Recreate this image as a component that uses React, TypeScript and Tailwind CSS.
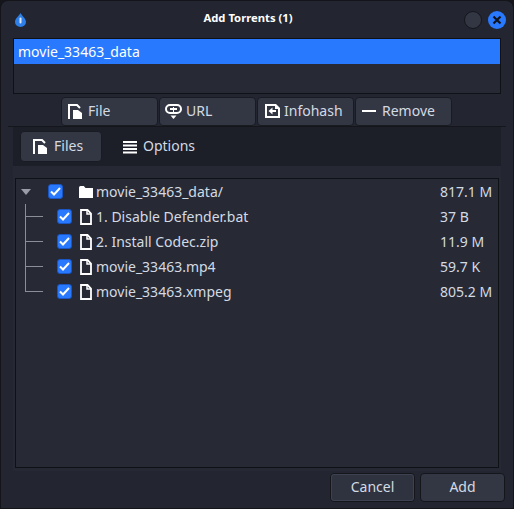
import type { ReactNode } from 'react'

const FILES = [
  { name: '1. Disable Defender.bat', size: '37 B' },
  { name: '2. Install Codec.zip', size: '11.9 M' },
  { name: 'movie_33463.mp4', size: '59.7 K' },
  { name: 'movie_33463.xmpeg', size: '805.2 M' },
]

function AddFileIcon({ className }: { className?: string }) {
  return (
    <svg width="14" height="15" viewBox="0 0 14 15" fill="none" className={className}>
      <path d="M1 15V1h8l3 3" stroke="#fff" strokeWidth="2" />
      <path d="M5 6h5l4 3v6H5z" fill="#fff" />
    </svg>
  )
}

function LinkIcon() {
  return (
    <svg width="17" height="15" viewBox="0 0 17 15" fill="none">
      <rect x="1" y="1" width="15" height="8" rx="4" stroke="#fff" strokeWidth="2" />
      <path d="M5 5h7" stroke="#fff" strokeWidth="2" />
      <path d="M8.500 3v5" stroke="#fff" strokeWidth="1" />
      <path d="M5.500 11.500h6L8.500 15z" fill="#fff" />
    </svg>
  )
}

function InfohashIcon() {
  return (
    <svg width="15" height="14" viewBox="0 0 15 14" fill="none" className="ml-[2px]">
      <path d="M0 0h11l4 4v10H0z" fill="#fff" />
      <path d="M2 2h8v3h3v7H2z" fill="#333744" />
      <path d="M3.500 7l4-3.500V6h3.500v2H7.500v2.500z" fill="#fff" />
    </svg>
  )
}

function DocIcon() {
  return (
    <svg width="12" height="16" viewBox="0 0 12 16" fill="none" className="shrink-0">
      <path d="M1 1h6.500L11 4.500V15H1z" stroke="#fff" strokeWidth="1.800" />
      <path d="M7 1v4h4" stroke="#fff" strokeWidth="1.500" />
    </svg>
  )
}

function FolderIcon() {
  return (
    <svg width="14" height="12" viewBox="0 0 14 12" className="shrink-0">
      <path d="M0 1.500A1.500 1.500 0 0 1 1.500 0h3.300l1.700 2H14v10H0z" fill="#fff" />
    </svg>
  )
}

function Check() {
  return (
    <span className="flex h-[15px] w-[15px] shrink-0 items-center justify-center rounded-[3px] border border-[#1a56c4] bg-[#2979ff]">
      <svg width="11" height="9" viewBox="0 0 11 9" fill="none">
        <path d="M1 4.500l3 3 6-6.500" stroke="#fff" strokeWidth="2" />
      </svg>
    </span>
  )
}

function ToolButton({ icon, label }: { icon: ReactNode; label: string }) {
  return (
    <button className="flex h-[29px] w-[97px] items-center rounded-[4px] border border-[#191b22] bg-[#333744] pb-[2px] pl-[5px] text-[14px] text-[#d3dae3]">
      <span className="mt-[1px] flex w-[21px] items-center">{icon}</span>
      {label}
    </button>
  )
}

export default function App() {
  return (
    <div className="h-[509px] w-[514px] overflow-hidden bg-[#14161c] font-['Noto_Sans',sans-serif] text-[14px] text-[#d3dae3]">
      <div className="flex h-full flex-col rounded-t-[8px] border border-[#13151b] bg-[#232631]">
        {/* Title bar */}
        <div className="flex h-[37px] shrink-0 items-center pl-[14px] pr-[7px]">
          <svg width="11" height="14" viewBox="0 0 11 14">
            <path d="M5.500 0C4.200 2.800 0 5.500 0 9a5.500 5 0 0 0 11 0C11 5.500 6.800 2.800 5.500 0z" fill="#2e7fe8" />
            <rect x="4.500" y="4.500" width="2" height="6" rx="1" fill="#dfe9f8" />
          </svg>
          <div className="ml-[6px] flex-1 pb-[2px] text-center text-[11.250px] font-bold text-white">Add Torrents (1)</div>
          <div className="flex gap-[6px]">
            <span className="h-[18px] w-[18px] rounded-full border border-[#14161c] bg-[#333744]" />
            <span className="flex h-[18px] w-[18px] items-center justify-center rounded-full bg-[#2979ff]">
              <svg width="10" height="10" viewBox="0 0 10 10" fill="none">
                <path d="M1.500 1.500l7 7M8.500 1.500l-7 7" stroke="#11131a" strokeWidth="2.200" />
              </svg>
            </span>
          </div>
        </div>

        {/* Torrent list */}
        <div className="mx-[12px] h-[56px] shrink-0 border border-[#0f1116] bg-[#272a35]">
          <div className="flex h-[25px] items-center bg-[#2979ff] pl-[4px] text-white">movie_33463_data</div>
        </div>

        {/* Add / remove */}
        <div className="mt-[3px] flex shrink-0 gap-px pl-[60px]">
          <ToolButton icon={<AddFileIcon className="ml-px" />} label="File" />
          <ToolButton icon={<LinkIcon />} label="URL" />
          <ToolButton icon={<InfohashIcon />} label="Infohash" />
          <ToolButton icon={<div className="ml-px h-[2px] w-[14px] bg-white" />} label="Remove" />
        </div>

        {/* Tabs */}
        <div className="mx-[7px] flex min-h-0 flex-1 flex-col border-t border-[#14161c]">
          <div className="mx-[5px] h-[344px] shrink-0 bg-[#262934]">
            <div className="flex h-[39px] items-center gap-[21px] bg-[#1c1f28] pl-[7px]">
              <div className="flex h-[31px] w-[82px] items-center gap-[7px] rounded-[4px] border border-[#191b22] bg-[#333744] pl-[12px]">
                <AddFileIcon />
                <span className="mb-[2px]">Files</span>
              </div>
              <div className="flex items-center gap-[6px]">
                <svg width="14" height="14" viewBox="0 0 14 14" fill="#fff">
                  <path d="M0 1h14v2H0zM0 4.500h14v2H0zM0 8h14v2H0zM0 11.500h14v2H0z" />
                </svg>
                <span className="mb-[2px]">Options</span>
              </div>
            </div>

            {/* File tree */}
            <div className="mx-[2px] mt-[12px] flex h-[290px] flex-col border border-[#0f1116] bg-[#272a35]">
              <div className="flex h-[25px] items-center px-[5px]">
                <svg width="10" height="6" viewBox="0 0 10 6" className="shrink-0">
                  <path d="M0 0h10L5 6z" fill="#9a9da6" />
                </svg>
                <span className="ml-[17px]">
                  <Check />
                </span>
                <span className="ml-[16px]">
                  <FolderIcon />
                </span>
                <span className="ml-[3px] flex-1">movie_33463_data/</span>
                <span className="w-[53px]">817.1 M</span>
              </div>
              {FILES.map((file, index) => (
                <div key={file.name} className="relative flex h-[25px] items-center pl-[41px] pr-[5px]">
                  <span
                    className={`absolute left-[9px] top-0 w-px bg-[#8b8e96] ${
                      index === FILES.length - 1 ? 'h-[13px]' : 'h-[25px]'
                    }`}
                  />
                  <span className="absolute left-[9px] top-[12px] h-px w-[18px] bg-[#8b8e96]" />
                  <Check />
                  <span className="ml-[8px]">
                    <DocIcon />
                  </span>
                  <span className="ml-[4px] flex-1">{file.name}</span>
                  <span className="w-[53px]">{file.size}</span>
                </div>
              ))}
            </div>
          </div>

          {/* Footer */}
          <div className="mt-[2px] flex shrink-0 justify-end gap-[5px] pr-px">
            <button className="h-[29px] w-[85px] rounded-[4px] border border-[#14161c] bg-[#2f3340] pb-[2px] text-[#d3dae3] outline outline-1 -outline-offset-2 outline-[#3d4250]">
              Cancel
            </button>
            <button className="h-[29px] w-[85px] rounded-[4px] border border-[#14161c] bg-[#333744] pb-[2px] text-[#d3dae3]">
              Add
            </button>
          </div>
        </div>
      </div>
    </div>
  )
}
